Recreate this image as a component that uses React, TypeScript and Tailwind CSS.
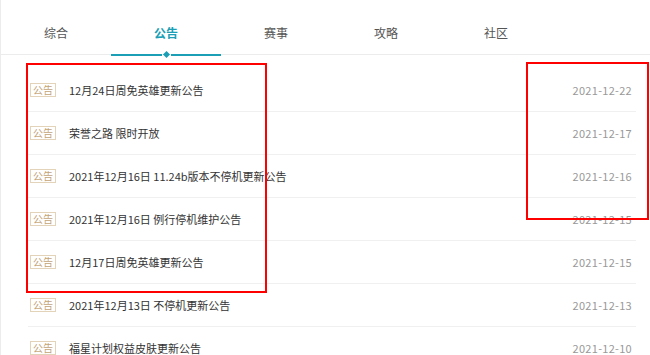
import React from "react";

const tabs = ["综合", "公告", "赛事", "攻略", "社区"];
const rows = [
  ["12月24日周免英雄更新公告", "2021-12-22"],
  ["荣誉之路 限时开放", "2021-12-17"],
  ["2021年12月16日 11.24b版本不停机更新公告", "2021-12-16"],
  ["2021年12月16日 例行停机维护公告", "2021-12-15"],
  ["12月17日周免英雄更新公告", "2021-12-15"],
  ["2021年12月13日 不停机更新公告", "2021-12-13"],
  ["福星计划权益皮肤更新公告", "2021-12-10"],
];

export default function App() {
  return (
    <div
      className="relative w-[650px] h-[355px] overflow-hidden bg-white border-l border-[#ececec]"
      style={{ fontFamily: '"Noto Sans CJK SC", "Noto Sans", sans-serif' }}
    >
      <div className="flex h-[55px] border-b border-[#ececec]">
        {tabs.map((t, i) => (
          <div
            key={t}
            className={
              "relative w-[110px] flex items-center justify-center pt-[12px] text-[12px] " +
              (i === 1 ? "text-[#1a9fb6] font-bold" : "text-[#555]")
            }
          >
            {t}
            {i === 1 && (
              <div className="absolute left-0 right-0 bottom-[-2px] h-[3px] flex items-center">
                <div className="flex-1 h-[2px] bg-[#1a9fb6]" />
                <div className="w-[5px] h-[5px] mx-[2px] rotate-45 bg-[#1a9fb6]" />
                <div className="flex-1 h-[2px] bg-[#1a9fb6]" />
              </div>
            )}
          </div>
        ))}
      </div>
      <div className="mt-[14px] ml-[27px] w-[608px]">
        {rows.map(([title, date], i) => (
          <div key={i} className="h-[43px] flex items-center border-b border-[#f0f0f0]">
            <span className="ml-[2px] w-[26px] h-[14px] flex items-center justify-center border border-[#e3d3b8] text-[10px] leading-none text-[#c4a478]">
              公告
            </span>
            <span className="ml-[13px] text-[11px] text-[#333] flex-1">{title}</span>
            <span className="mr-[4px] text-[11px] text-[#999] tracking-[0.3px]">{date}</span>
          </div>
        ))}
      </div>
      <div className="absolute left-[25px] top-[63px] w-[241px] h-[230px] border-2 border-[#ff0000]" />
      <div className="absolute left-[525px] top-[62px] w-[123px] h-[158px] border-2 border-[#ff0000]" />
    </div>
  );
}
